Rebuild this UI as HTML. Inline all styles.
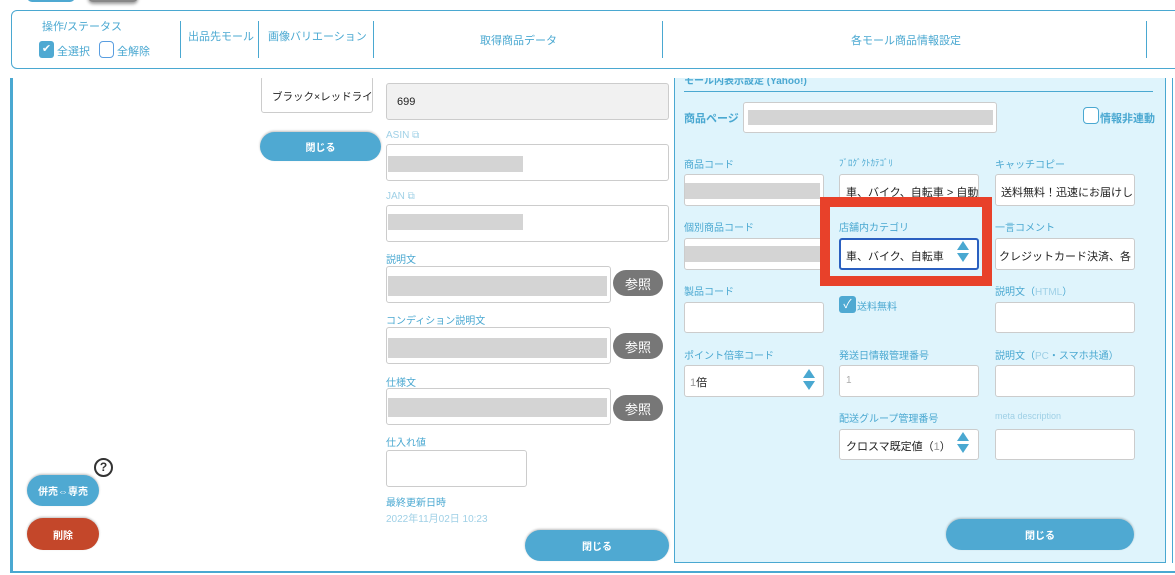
<!DOCTYPE html>
<html><head><meta charset="utf-8"><style>
*{box-sizing:border-box;margin:0;padding:0}
body{width:1175px;height:575px;position:relative;overflow:hidden;background:#fff;font-family:"Liberation Sans","Noto Sans CJK JP",sans-serif;color:#333}
.a{position:absolute}
.lbl{position:absolute;font-size:10px;color:#4aa8d1;white-space:nowrap}
.in{position:absolute;background:#fff;border:1px solid #ccc;border-radius:3px}
.bar{position:absolute;background:#d4d4d4}
.btn{position:absolute;background:#4fa9d2;color:#fff;font-size:10px;font-weight:bold;border-radius:16px;display:flex;align-items:center;justify-content:center;box-shadow:0 -1px 2px rgba(0,0,0,.25)}
.ref{position:absolute;background:#777;color:#fff;font-size:13px;border-radius:13px;display:flex;align-items:center;justify-content:center;width:50px;height:26px;left:613px}
.t{position:absolute;font-size:11px;color:#222;white-space:nowrap}
.hd{position:absolute;font-size:11px;color:#4aa8d1;white-space:nowrap}
.vl{position:absolute;top:21px;height:37px;width:1px;background:#4aa8d1}
.spin{position:absolute;width:12px;height:22px}
</style></head><body>
<div class="a" style="left:27px;top:-8px;width:48px;height:10px;background:#4fa9d2;border-radius:5px"></div>
<div class="a" style="left:88px;top:-8px;width:50px;height:10px;background:#888;border-radius:5px;box-shadow:0 2px 3px rgba(0,0,0,.4)"></div>
<!-- header -->
<div class="a" style="left:11px;top:10px;width:1180px;height:59px;border:1px solid #4aa8d1;border-radius:6px"></div>
<div class="hd" style="left:42px;top:18px">操作/ステータス</div>
<div class="a" style="left:39px;top:41px;width:15px;height:17px;background:#4fa9d2;border-radius:3px;color:#fff;font-size:11px;text-align:center;line-height:17px">✔</div>
<div class="hd" style="left:57px;top:43px">全選択</div>
<div class="a" style="left:99px;top:41px;width:15px;height:17px;border:1px solid #5a9ee0;border-radius:4px"></div>
<div class="hd" style="left:117px;top:43px">全解除</div>
<div class="vl" style="left:180px"></div>
<div class="hd" style="left:188px;top:28px">出品先モール</div>
<div class="vl" style="left:258px"></div>
<div class="hd" style="left:268px;top:28px">画像バリエーション</div>
<div class="vl" style="left:373px"></div>
<div class="hd" style="left:480px;top:32px">取得商品データ</div>
<div class="vl" style="left:662px"></div>
<div class="hd" style="left:851px;top:32px">各モール商品情報設定</div>
<div class="vl" style="left:1146px"></div>
<!-- main frame -->
<div class="a" style="left:10px;top:78px;width:3px;height:495px;background:#4aa8d1"></div>
<div class="a" style="left:10px;top:571px;width:1165px;height:2px;background:#4aa8d1"></div>
<div class="a" style="left:1172px;top:78px;width:1px;height:485px;background:#4aa8d1"></div>
<!-- left column -->
<div class="in" style="left:261px;top:76px;width:112px;height:37px"></div>
<div class="t" style="left:272px;top:89px;font-size:10.5px">ブラック×レッドライ</div>
<div class="btn" style="left:260px;top:132px;width:121px;height:29px">閉じる</div>
<!-- middle -->
<div class="in" style="left:386px;top:83px;width:283px;height:37px;background:#f1f1f1"></div>
<div class="t" style="left:397px;top:96px">699</div>
<div class="lbl" style="left:386px;top:130px;color:#9fd0e6">ASIN ⧉</div>
<div class="in" style="left:386px;top:144px;width:283px;height:37px"></div><div class="bar" style="left:388px;top:156px;width:135px;height:16px"></div>
<div class="lbl" style="left:386px;top:191px;color:#9fd0e6">JAN ⧉</div>
<div class="in" style="left:386px;top:205px;width:283px;height:37px"></div><div class="bar" style="left:388px;top:214px;width:135px;height:16px"></div>
<div class="lbl" style="left:386px;top:251px">説明文</div>
<div class="in" style="left:386px;top:266px;width:225px;height:37px"></div><div class="bar" style="left:388px;top:276px;width:219px;height:20px"></div>
<div class="ref" style="top:270px">参照</div>
<div class="lbl" style="left:386px;top:312px">コンディション説明文</div>
<div class="in" style="left:386px;top:327px;width:225px;height:37px"></div><div class="bar" style="left:388px;top:338px;width:219px;height:20px"></div>
<div class="ref" style="top:333px">参照</div>
<div class="lbl" style="left:386px;top:374px">仕様文</div>
<div class="in" style="left:386px;top:388px;width:225px;height:37px"></div><div class="bar" style="left:388px;top:398px;width:219px;height:19px"></div>
<div class="ref" style="top:395px">参照</div>
<div class="lbl" style="left:386px;top:434px">仕入れ値</div>
<div class="in" style="left:386px;top:450px;width:141px;height:37px"></div>
<div class="lbl" style="left:386px;top:494px">最終更新日時</div>
<div class="lbl" style="left:386px;top:510px;color:#9fd0e6">2022年11月02日 10:23</div>
<div class="btn" style="left:525px;top:530px;width:144px;height:31px">閉じる</div>
<!-- left buttons -->
<div class="a" style="left:94px;top:458px;width:19px;height:19px;border:2px solid #333;border-radius:50%;font-size:12px;font-weight:bold;text-align:center;line-height:15px;color:#333">?</div>
<div class="btn" style="left:27px;top:475px;width:72px;height:31px;font-size:10px">併売⇔専売</div>
<div class="btn" style="left:27px;top:518px;width:72px;height:32px;background:#c4472a">削除</div>
<!-- right panel -->
<div class="a" style="left:674px;top:70px;width:492px;height:493px;background:#dff4fc;border:1px solid #4aa8d1;border-top:none"></div>
<div class="a" style="left:0;top:69px;width:1175px;height:9px;background:#fff"></div>
<div class="a" style="left:684px;top:72px;font-size:10px;font-weight:bold;color:#4aa8d1;clip-path:inset(6px 0 0 0)">モール内表示設定 (Yahoo!)</div>
<div class="a" style="left:684px;top:91px;width:469px;height:1px;background:#4aa8d1"></div>
<div class="lbl" style="left:684px;top:110px;font-size:11px;font-weight:bold">商品ページ</div>
<div class="in" style="left:743px;top:102px;width:254px;height:31px"></div><div class="bar" style="left:748px;top:110px;width:245px;height:15px"></div>
<div class="a" style="left:1083px;top:107px;width:16px;height:17px;border:1px solid #4aa8d1;border-radius:4px;background:#fff"></div>
<div class="lbl" style="left:1100px;top:110px;font-size:11px;font-weight:bold">情報非連動</div>
<!-- col labels -->
<div class="lbl" style="left:684px;top:156px">商品コード</div>
<div class="lbl" style="left:839px;top:156px;font-size:9px">ﾌﾞﾛｸﾞｸﾄｶﾃｺﾞﾘ</div>
<div class="lbl" style="left:995px;top:156px">キャッチコピー</div>
<div class="in" style="left:684px;top:174px;width:140px;height:32px"></div><div class="bar" style="left:685px;top:183px;width:135px;height:16px"></div>
<div class="in" style="left:839px;top:174px;width:140px;height:32px;overflow:hidden"><span class="t" style="left:6px;top:9px">車、バイク、自転車 &gt; 自動</span></div>
<div class="in" style="left:995px;top:174px;width:140px;height:32px;overflow:hidden"><span class="t" style="left:5px;top:9px">送料無料！迅速にお届けし</span></div>
<div class="lbl" style="left:684px;top:219px">個別商品コード</div>
<div class="lbl" style="left:839px;top:219px">店舗内カテゴリ</div>
<div class="lbl" style="left:995px;top:219px">一言コメント</div>
<div class="in" style="left:684px;top:238px;width:140px;height:32px"></div><div class="bar" style="left:685px;top:246px;width:135px;height:16px"></div>
<div class="in" style="left:839px;top:238px;width:140px;height:32px;border:2px solid #2a5fc0"><span class="t" style="left:5px;top:8px">車、バイク、自転車</span></div>
<svg class="spin" style="left:957px;top:241px" viewBox="0 0 12 22"><path d="M6 0L12 9H0Z M0 12H12L6 21Z" fill="#4aa8d1"/></svg>
<div class="in" style="left:995px;top:238px;width:140px;height:32px;overflow:hidden"><span class="t" style="left:3px;top:9px">クレジットカード決済、各</span></div>
<div class="lbl" style="left:684px;top:283px">製品コード</div>
<div class="lbl" style="left:995px;top:283px">説明文（<span style="color:#9fd0e6">HTML</span>）</div>
<div class="in" style="left:684px;top:302px;width:140px;height:31px"></div>
<div class="a" style="left:839px;top:296px;width:17px;height:17px;background:#4fa9d2;border-radius:3px;color:#fff;font-size:12px;text-align:center;line-height:17px">✓</div>
<div class="lbl" style="left:857px;top:298px">送料無料</div>
<div class="in" style="left:995px;top:302px;width:140px;height:31px"></div>
<!-- red highlight -->
<div class="a" style="left:820px;top:197px;width:172px;height:89px;border:10px solid #e8412a"></div>
<div class="lbl" style="left:684px;top:347px">ポイント倍率コード</div>
<div class="lbl" style="left:839px;top:347px">発送日情報管理番号</div>
<div class="lbl" style="left:995px;top:347px">説明文（<span style="color:#9fd0e6">PC</span>・スマホ共通）</div>
<div class="in" style="left:684px;top:365px;width:140px;height:32px"><span class="t" style="left:5px;top:8px"><span style="color:#999">1</span>倍</span></div>
<svg class="spin" style="left:803px;top:369px" viewBox="0 0 12 22"><path d="M6 0L12 9H0Z M0 12H12L6 21Z" fill="#4aa8d1"/></svg>
<div class="in" style="left:839px;top:365px;width:140px;height:32px"><span class="t" style="left:6px;top:9px;color:#aaa;font-size:10px">1</span></div>
<div class="in" style="left:995px;top:365px;width:140px;height:32px"></div>
<div class="lbl" style="left:839px;top:410px">配送グループ管理番号</div>
<div class="lbl" style="left:995px;top:411px;color:#9fd0e6;font-size:9px">meta description</div>
<div class="in" style="left:839px;top:429px;width:140px;height:31px"><span class="t" style="left:6px;top:8px">クロスマ既定値（<span style="color:#999">1</span>）</span></div>
<svg class="spin" style="left:957px;top:432px" viewBox="0 0 12 22"><path d="M6 0L12 9H0Z M0 12H12L6 21Z" fill="#4aa8d1"/></svg>
<div class="in" style="left:995px;top:429px;width:140px;height:31px"></div>
<div class="btn" style="left:946px;top:519px;width:188px;height:31px">閉じる</div>
</body></html>
